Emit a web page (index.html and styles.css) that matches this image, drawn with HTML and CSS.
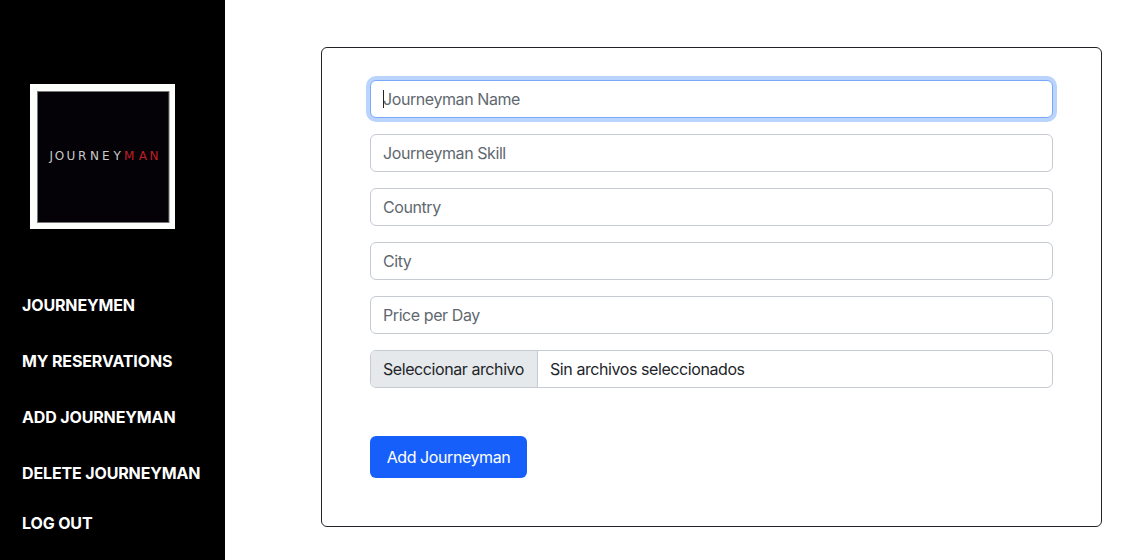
FILE: index.html
```html
<!DOCTYPE html>
<html lang="es">
<head>
<meta charset="utf-8">
<title>Journeyman</title>
<link rel="stylesheet" href="styles.css">
</head>
<body>
<div class="app">
  <aside class="sidebar">
    <div class="logo">
      <svg class="logo-mark" width="133" height="132" viewBox="0 0 133 132">
        <rect x="0.5" y="0.5" width="131.5" height="131" fill="#040206" stroke="#77777a"/>
        <text class="wordmark" y="69" fill="#c9c9c9"><tspan x="12.5 17.7 29.6 41 53 65 76.5">JOURNEY</tspan><tspan x="87 101.7 112.5" fill="#c01d27">MAN</tspan></text>
      </svg>
    </div>
    <nav class="menu">
      <a class="menu-item">JOURNEYMEN</a>
      <a class="menu-item">MY RESERVATIONS</a>
      <a class="menu-item">ADD JOURNEYMAN</a>
      <a class="menu-item">DELETE JOURNEYMAN</a>
      <a class="menu-item menu-logout">LOG OUT</a>
    </nav>
  </aside>
  <main class="content">
    <form class="card">
      <div class="field focused"><input class="control" placeholder="Journeyman Name"></div>
      <div class="field"><input class="control" placeholder="Journeyman Skill"></div>
      <div class="field"><input class="control" placeholder="Country"></div>
      <div class="field"><input class="control" placeholder="City"></div>
      <div class="field"><input class="control" placeholder="Price per Day"></div>
      <div class="file">
        <span class="file-button">Seleccionar archivo</span>
        <span class="file-name">Sin archivos seleccionados</span>
      </div>
      <button class="submit" type="button">Add Journeyman</button>
    </form>
  </main>
</div>
</body>
</html>
```
FILE: styles.css
```css
* { box-sizing: border-box; }
body {
  margin: 0;
  background: #fff;
  color: #212529;
  font: 400 16px/24px Inter, "Liberation Sans", sans-serif;
  letter-spacing: -0.42px;
}
.app { display: flex; height: 560px; overflow: hidden; }
.sidebar { width: 225px; flex: none; background: #000; padding-top: 84px; }
.logo {
  width: 145px;
  height: 145px;
  margin-left: 30px;
  padding: 7px 0 0 7px;
  background: #fdfffc;
}
.logo-mark { display: block; }
.wordmark { font: 400 12px "DejaVu Sans", sans-serif; letter-spacing: 0; }
.menu { display: flex; flex-direction: column; gap: 32px; padding: 64px 0 0 22px; }
.menu-item { color: #fff; font-weight: 700; letter-spacing: -0.14px; white-space: nowrap; }
.menu-logout { margin-top: -6px; }
.content { flex: 1; padding: 47px 29px 33px 96px; }
.card {
  display: flex;
  flex-direction: column;
  gap: 16px;
  height: 480px;
  padding: 32px 48px;
  border: 1px solid #212529;
  border-radius: 6px;
}
.field { position: relative; height: 38px; }
.control {
  display: block;
  width: 100%;
  height: 38px;
  padding: 6px 12px;
  border: 1px solid #c5cad3;
  border-radius: 6px;
  outline: 0;
  background: #fff;
  font: inherit;
  letter-spacing: inherit;
}
.control::placeholder { color: #5f686f; opacity: 1; }
.focused .control { border-color: #79a9fb; box-shadow: 0 0 0 4px #bad4fe; }
.focused::after {
  content: "";
  position: absolute;
  left: 13px;
  top: 10px;
  width: 1px;
  height: 18px;
  background: #212529;
}
.file {
  display: flex;
  height: 38px;
  border: 1px solid #c5cad3;
  border-radius: 6px;
  overflow: hidden;
}
.file-button {
  width: 167px;
  padding: 6px 12px;
  background: #e5e9eb;
  border-right: 1px solid #c5cad3;
  white-space: nowrap;
}
.file-name { padding: 6px 12px; white-space: nowrap; }
.submit {
  width: 157px;
  height: 42px;
  margin-top: 32px;
  padding: 0;
  border: 0;
  border-radius: 6px;
  background: #165ffa;
  color: #fff;
  font: inherit;
  letter-spacing: inherit;
}
```
